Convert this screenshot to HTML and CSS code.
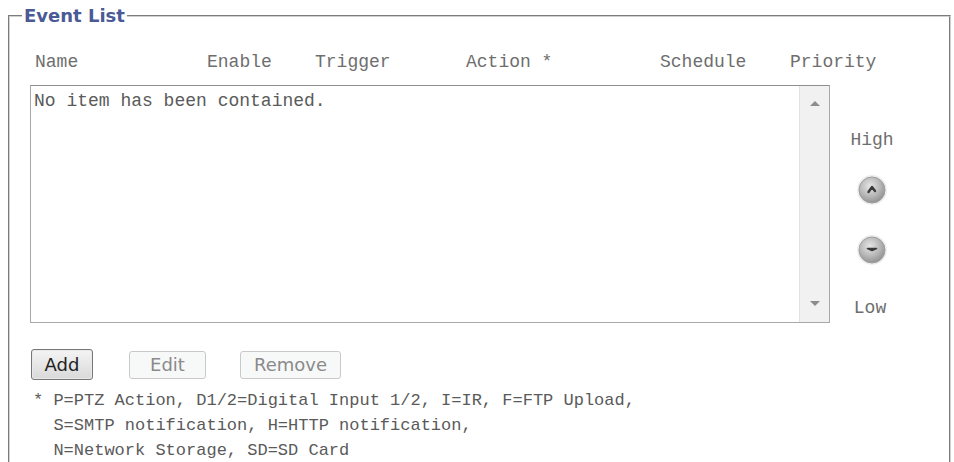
FILE: index.html
```html
<!DOCTYPE html>
<html>
<head>
<meta charset="utf-8">
<link rel="stylesheet" href="styles.css">
</head>
<body>
<fieldset class="panel">
  <legend class="legend">Event List</legend>
  <div class="head">
    <span class="col c-name">Name</span>
    <span class="col c-enable">Enable</span>
    <span class="col c-trigger">Trigger</span>
    <span class="col c-action">Action *</span>
    <span class="col c-sched">Schedule</span>
    <span class="col c-prio">Priority</span>
  </div>
  <div class="main">
    <div class="list">
      <div class="list-body">No item has been contained.</div>
      <div class="scroll">
        <span class="arrow up"></span>
        <span class="arrow down"></span>
      </div>
    </div>
    <div class="prio">
      <span class="prio-label high">High</span>
      <svg class="round-btn up-btn" width="32" height="32" viewBox="0 0 32 32">
        <defs>
          <radialGradient id="g1" cx="42%" cy="35%" r="70%">
            <stop offset="0" stop-color="#e6e6e6"/>
            <stop offset="0.55" stop-color="#b8b8b8"/>
            <stop offset="1" stop-color="#8c8c8c"/>
          </radialGradient>
        </defs>
        <circle cx="16" cy="16" r="15" fill="#eeeeee"/>
        <circle cx="16" cy="16" r="13" fill="url(#g1)" stroke="#a0a0a0" stroke-width="1"/>
        <path d="M12.5 18 L16 13 L19 17" fill="none" stroke="#3a3a3a" stroke-width="2.4" stroke-linecap="round" stroke-linejoin="round"/>
      </svg>
      <svg class="round-btn down-btn" width="32" height="32" viewBox="0 0 32 32">
        <defs>
          <radialGradient id="g2" cx="42%" cy="35%" r="70%">
            <stop offset="0" stop-color="#e6e6e6"/>
            <stop offset="0.55" stop-color="#b8b8b8"/>
            <stop offset="1" stop-color="#8c8c8c"/>
          </radialGradient>
        </defs>
        <circle cx="16" cy="16" r="15" fill="#eeeeee"/>
        <circle cx="16" cy="16" r="13" fill="url(#g2)" stroke="#a0a0a0" stroke-width="1"/>
        <path d="M11.5 14.5 L20.5 14.5 L16 16.5 Z" fill="#3a3a3a" stroke="#3a3a3a" stroke-width="1.6" stroke-linejoin="round"/>
      </svg>
      <span class="prio-label low">Low</span>
    </div>
  </div>
  <div class="buttons">
    <button class="btn btn-add">Add</button>
    <button class="btn btn-off btn-edit">Edit</button>
    <button class="btn btn-off btn-remove">Remove</button>
  </div>
  <div class="note">* P=PTZ Action, D1/2=Digital Input 1/2, I=IR, F=FTP Upload,<br>&nbsp;&nbsp;S=SMTP notification, H=HTTP notification,<br>&nbsp;&nbsp;N=Network Storage, SD=SD Card</div>
</fieldset>
</body>
</html>
```
FILE: styles.css
```css
html, body {
  margin: 0;
  padding: 0;
  background: #ffffff;
}

body {
  font-family: "Liberation Mono", "DejaVu Sans Mono", monospace;
  overflow: hidden;
}

.panel {
  margin: 5px 3px 0 8px;
  padding: 0 0 20px 20px;
  border: 2px groove #d0d0d0;
  border-bottom: none;
  min-width: 0;
}

.legend {
  margin-left: -8px;
  padding: 0 2px;
  font-family: "DejaVu Sans", Verdana, sans-serif;
  font-weight: bold;
  font-size: 18px;
  line-height: 21px;
  color: #4b5996;
}

.head {
  display: flex;
  margin-top: 25px;
  padding-left: 5px;
  height: 22px;
  line-height: 22px;
  font-size: 18px;
  color: #6e6e6e;
}

.col { display: block; white-space: pre; }
.c-name { width: 172px; }
.c-enable { width: 108px; }
.c-trigger { width: 151px; }
.c-action { width: 194px; }
.c-sched { width: 130px; }

.main {
  display: flex;
  margin-top: 12px;
}

.list {
  width: 800px;
  height: 238px;
  box-sizing: border-box;
  border: 1px solid #a8a8a8;
  border-top-color: #8f8f8f;
  display: flex;
}

.list-body {
  flex: 1;
  padding: 4px 3px;
  font-size: 18px;
  line-height: 22px;
  color: #5a5a5a;
}

.scroll {
  width: 29px;
  background: #f1f1f1;
  border-left: 1px solid #e2e2e2;
  display: flex;
  flex-direction: column;
  justify-content: space-between;
  align-items: center;
  padding: 15px 0 16px;
}

.arrow {
  width: 0;
  height: 0;
  border-left: 5px solid transparent;
  border-right: 5px solid transparent;
}
.arrow.up { border-bottom: 5px solid #8c8c8c; }
.arrow.down { border-top: 5px solid #8c8c8c; }

.prio {
  width: 84px;
  display: flex;
  flex-direction: column;
  align-items: center;
  padding-top: 44px;
}

.prio-label {
  font-size: 18px;
  line-height: 22px;
  color: #6e6e6e;
  font-family: "Liberation Mono", monospace;
}

.round-btn { display: block; }
.up-btn { margin-top: 23px; }
.down-btn { margin-top: 28px; }
.low { margin-top: 31px; margin-left: -4px; }

.buttons {
  display: flex;
  align-items: center;
  margin-top: 26px;
  margin-left: 1px;
}

.btn {
  font-family: "DejaVu Sans", Verdana, sans-serif;
  font-size: 18px;
  padding: 0;
  border-radius: 3px;
  box-sizing: border-box;
}

.btn-add {
  width: 62px;
  height: 31px;
  color: #222;
  border: 1px solid #777;
  background: linear-gradient(#f4f4f4, #d9d9d9);
  box-shadow: inset 0 0 0 1px #e8e8e8;
}

.btn-off {
  height: 28px;
  color: #8a8a8a;
  border: 1px solid #c9c9c9;
  background: #f7f8f8;
}

.btn-edit { width: 77px; margin-left: 36px; }
.btn-remove { width: 101px; margin-left: 34px; }

.note {
  margin-top: 8px;
  padding-left: 3px;
  font-size: 17px;
  line-height: 25px;
  color: #5a5a5a;
  white-space: nowrap;
}
```
